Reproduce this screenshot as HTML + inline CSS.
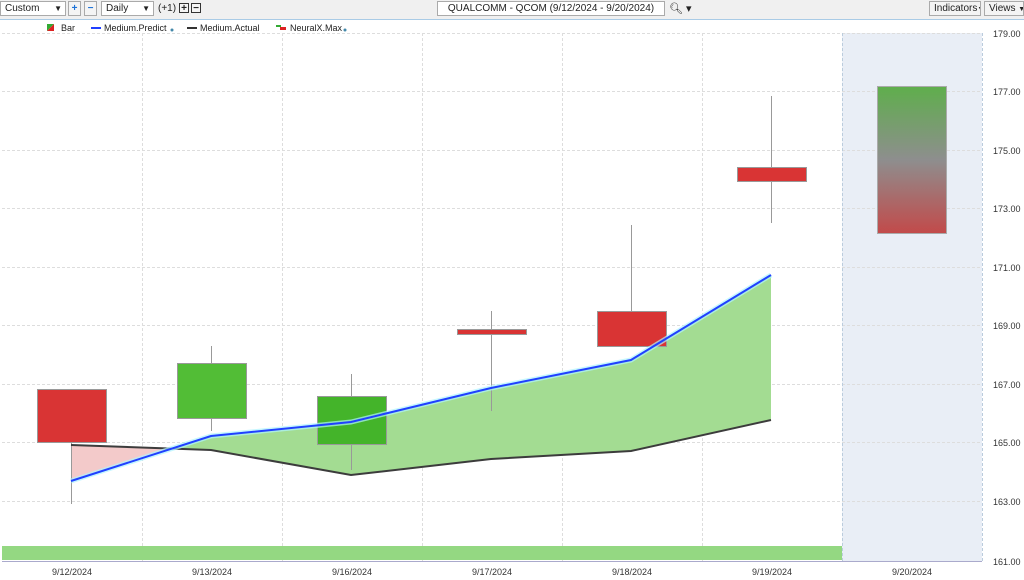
<!DOCTYPE html>
<html><head><style>
body{margin:0;width:1024px;height:580px;overflow:hidden;background:#fff;font-family:"Liberation Sans",sans-serif;}
.tb{position:absolute;left:0;top:0;width:1024px;height:19px;background:#f0f0f0;border-bottom:1px solid #a9cbe6;font-size:10px;color:#222;}
.b{position:absolute;top:1px;height:15px;border:1px solid #aaa;background:#f4f4f4;line-height:13px;box-sizing:border-box;white-space:nowrap;overflow:hidden;}
</style></head><body>
<div class="tb">
<div class="b" style="left:0;width:66px;padding-left:4px;background:#fff">Custom<span style="position:absolute;right:3px;font-size:8px">▼</span></div>
<div class="b" style="left:68px;width:13px;color:#1e73d8;font-weight:bold;text-align:center">+</div>
<div class="b" style="left:84px;width:13px;color:#1e73d8;font-weight:bold;text-align:center">−</div>
<div class="b" style="left:101px;width:53px;padding-left:4px;background:#fff">Daily<span style="position:absolute;right:3px;font-size:8px">▼</span></div>
<span style="position:absolute;left:158px;top:3px">(+1)</span>
<div class="b" style="left:179px;top:3px;width:10px;height:10px;line-height:9px;font-size:10px;text-align:center;font-weight:bold;border-color:#333">+</div>
<div class="b" style="left:191px;top:3px;width:10px;height:10px;line-height:9px;font-size:10px;text-align:center;font-weight:bold;border-color:#333">−</div>
<div class="b" style="left:437px;width:228px;background:#fff;text-align:center">QUALCOMM - QCOM (9/12/2024 - 9/20/2024)</div>
<span style="position:absolute;left:669px;top:2px;font-size:11px">🔍︎ ▾</span>
<div class="b" style="left:929px;width:52px;padding-left:4px">Indicators<span style="font-size:7px">▼</span></div>
<div class="b" style="left:984px;width:40px;padding-left:4px">Views <span style="font-size:7px">▼</span></div>
</div>
<svg width="1024" height="580" style="position:absolute;left:0;top:0" font-family="Liberation Sans,sans-serif">
<rect x="842" y="33" width="140" height="528" fill="#e9eef6"/>
<g stroke="#ddd" stroke-dasharray="3,2" stroke-width="1">
<line x1="2" y1="33.5" x2="982" y2="33.5"/><line x1="2" y1="91.5" x2="982" y2="91.5"/><line x1="2" y1="150.5" x2="982" y2="150.5"/><line x1="2" y1="208.5" x2="982" y2="208.5"/><line x1="2" y1="267.5" x2="982" y2="267.5"/><line x1="2" y1="325.5" x2="982" y2="325.5"/><line x1="2" y1="384.5" x2="982" y2="384.5"/><line x1="2" y1="442.5" x2="982" y2="442.5"/><line x1="2" y1="501.5" x2="982" y2="501.5"/>
<line x1="142.5" y1="33" x2="142.5" y2="561"/><line x1="282.5" y1="33" x2="282.5" y2="561"/><line x1="422.5" y1="33" x2="422.5" y2="561"/><line x1="562.5" y1="33" x2="562.5" y2="561"/><line x1="702.5" y1="33" x2="702.5" y2="561"/><line x1="842.5" y1="33" x2="842.5" y2="561" stroke="#bcd"/><line x1="982.5" y1="33" x2="982.5" y2="561" stroke="#bcd"/>
</g>
<line x1="2" y1="561.5" x2="982" y2="561.5" stroke="#aac" stroke-width="1"/>
<rect x="2" y="546" width="840" height="14" fill="#94d882"/>
<g font-size="9" fill="#333" text-anchor="middle">
<text x="72" y="575">9/12/2024</text><text x="212" y="575">9/13/2024</text><text x="352" y="575">9/16/2024</text><text x="492" y="575">9/17/2024</text><text x="632" y="575">9/18/2024</text><text x="772" y="575">9/19/2024</text><text x="912" y="575">9/20/2024</text>
</g>
<g font-size="9" fill="#333">
<text x="993" y="37">179.00</text><text x="993" y="95">177.00</text><text x="993" y="154">175.00</text><text x="993" y="212">173.00</text><text x="993" y="271">171.00</text><text x="993" y="329">169.00</text><text x="993" y="388">167.00</text><text x="993" y="446">165.00</text><text x="993" y="505">163.00</text><text x="993" y="565">161.00</text>
</g>
<polygon points="71,445 71,481 172,448.6" fill="#f3caca"/>
<polygon points="172,448.6 211,436 351,422 491,388 631,360 771,275 771,420 631,451 491,459 351,475 211,450" fill="#a3dc92"/>
<g stroke="#999" stroke-width="1">
<line x1="71.5" y1="404" x2="71.5" y2="504"/><line x1="211.5" y1="346" x2="211.5" y2="431"/><line x1="351.5" y1="374" x2="351.5" y2="470"/><line x1="491.5" y1="311" x2="491.5" y2="411"/><line x1="631.5" y1="225" x2="631.5" y2="346"/><line x1="771.5" y1="96" x2="771.5" y2="223"/>
</g>
<g stroke="#999" stroke-width="1">
<rect x="37.5" y="389.5" width="69" height="53" fill="#d93434"/>
<rect x="177.5" y="363.5" width="69" height="55" fill="#52bd36"/>
<rect x="317.5" y="396.5" width="69" height="48" fill="#44b42a"/>
<rect x="457.5" y="329.5" width="69" height="5" fill="#d93434"/>
<rect x="597.5" y="311.5" width="69" height="35" fill="#d93434"/>
<rect x="737.5" y="167.5" width="69" height="14" fill="#d93434"/>
</g>
<defs><linearGradient id="g" x1="0" y1="0" x2="0" y2="1"><stop offset="0" stop-color="#5fae4c"/><stop offset="0.5" stop-color="#8e8e8e"/><stop offset="1" stop-color="#c24a4a"/></linearGradient></defs>
<rect x="877.5" y="86.5" width="69" height="147" fill="url(#g)" stroke="#aaa"/>
<polyline points="71,445 211,450 351,475 491,459 631,451 771,420" fill="none" stroke="#3c3c3c" stroke-width="2"/>
<polyline points="71,481 211,436 351,422 491,388 631,360 771,275" fill="none" stroke="#aef4ff" stroke-width="5" opacity="0.7"/>
<polyline points="71,481 211,436 351,422 491,388 631,360 771,275" fill="none" stroke="#2040ff" stroke-width="2"/>
<g font-size="9" fill="#222">
<polygon points="47,24 54,24 47,31" fill="#3a3"/><polygon points="54,24 54,31 47,31" fill="#d22"/>
<text x="61" y="31">Bar</text>
<rect x="91" y="27" width="10" height="2" fill="#2040ff"/><text x="104" y="31">Medium.Predict</text><circle cx="172" cy="30" r="1.5" fill="#48a"/>
<rect x="187" y="27" width="10" height="2" fill="#333"/><text x="200" y="31">Medium.Actual</text>
<rect x="276" y="25" width="5" height="2" fill="#3a3"/><rect x="280" y="27" width="6" height="3" fill="#d22"/><text x="290" y="31">NeuralX.Max</text><circle cx="345" cy="30" r="1.5" fill="#48a"/>
</g>
</svg>
</body></html>
